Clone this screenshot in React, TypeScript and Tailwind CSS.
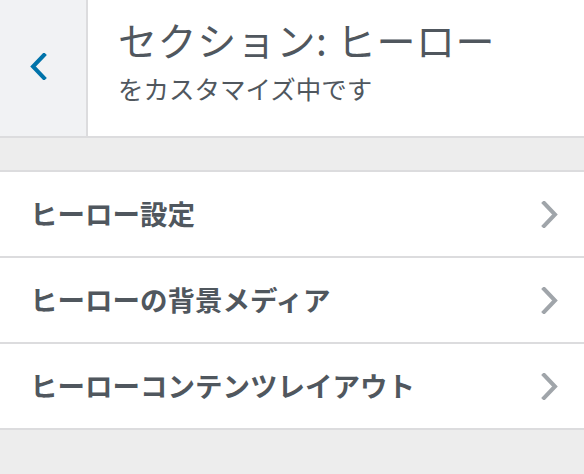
import React from 'react';

const items = ['ヒーロー設定', 'ヒーローの背景メディア', 'ヒーローコンテンツレイアウト'];

function Chevron({ dir, className }: { dir: 'left' | 'right'; className?: string }) {
  const d = dir === 'left' ? 'M14 2 L3 13.5 L14 25' : 'M3 2 L14 13.5 L3 25';
  return (
    <svg width="17" height="27" viewBox="0 0 17 27" className={className} fill="none">
      <path d={d} stroke="currentColor" strokeWidth="4" strokeLinecap="square" strokeLinejoin="miter" />
    </svg>
  );
}

export default function App() {
  return (
    <div
      className="h-[474px] w-[584px] overflow-hidden bg-[#ededed] text-[#50575e]"
      style={{ fontFamily: '"Noto Sans CJK JP", "Noto Sans", sans-serif' }}
    >
      <div className="flex h-[138px] border-b-2 border-[#dcdcde] bg-white">
        <button className="flex w-[88px] shrink-0 items-center justify-center border-r-2 border-[#dcdcde] bg-[#f1f2f4] pb-[4px] pr-[10px] text-[#0073aa]">
          <Chevron dir="left" />
        </button>
        <div className="flex flex-col pl-[30px] pt-[13px]">
          <h3 className="text-[39px] leading-[52px] font-normal tracking-[0.6px]">セクション: ヒーロー</h3>
          <span className="mt-[6px] text-[25.5px] leading-[34px]">をカスタマイズ中です</span>
        </div>
      </div>
      <div className="mt-[32px] border-t-2 border-[#dcdcde]">
        {items.map((label) => (
          <div
            key={label}
            className="flex h-[86px] items-center justify-between border-b-2 border-[#dcdcde] bg-white pl-[30px] pr-[26px]"
          >
            <span className="text-[27.5px] font-bold leading-none">{label}</span>
            <Chevron dir="right" className="text-[#a0a5aa]" />
          </div>
        ))}
      </div>
    </div>
  );
}
